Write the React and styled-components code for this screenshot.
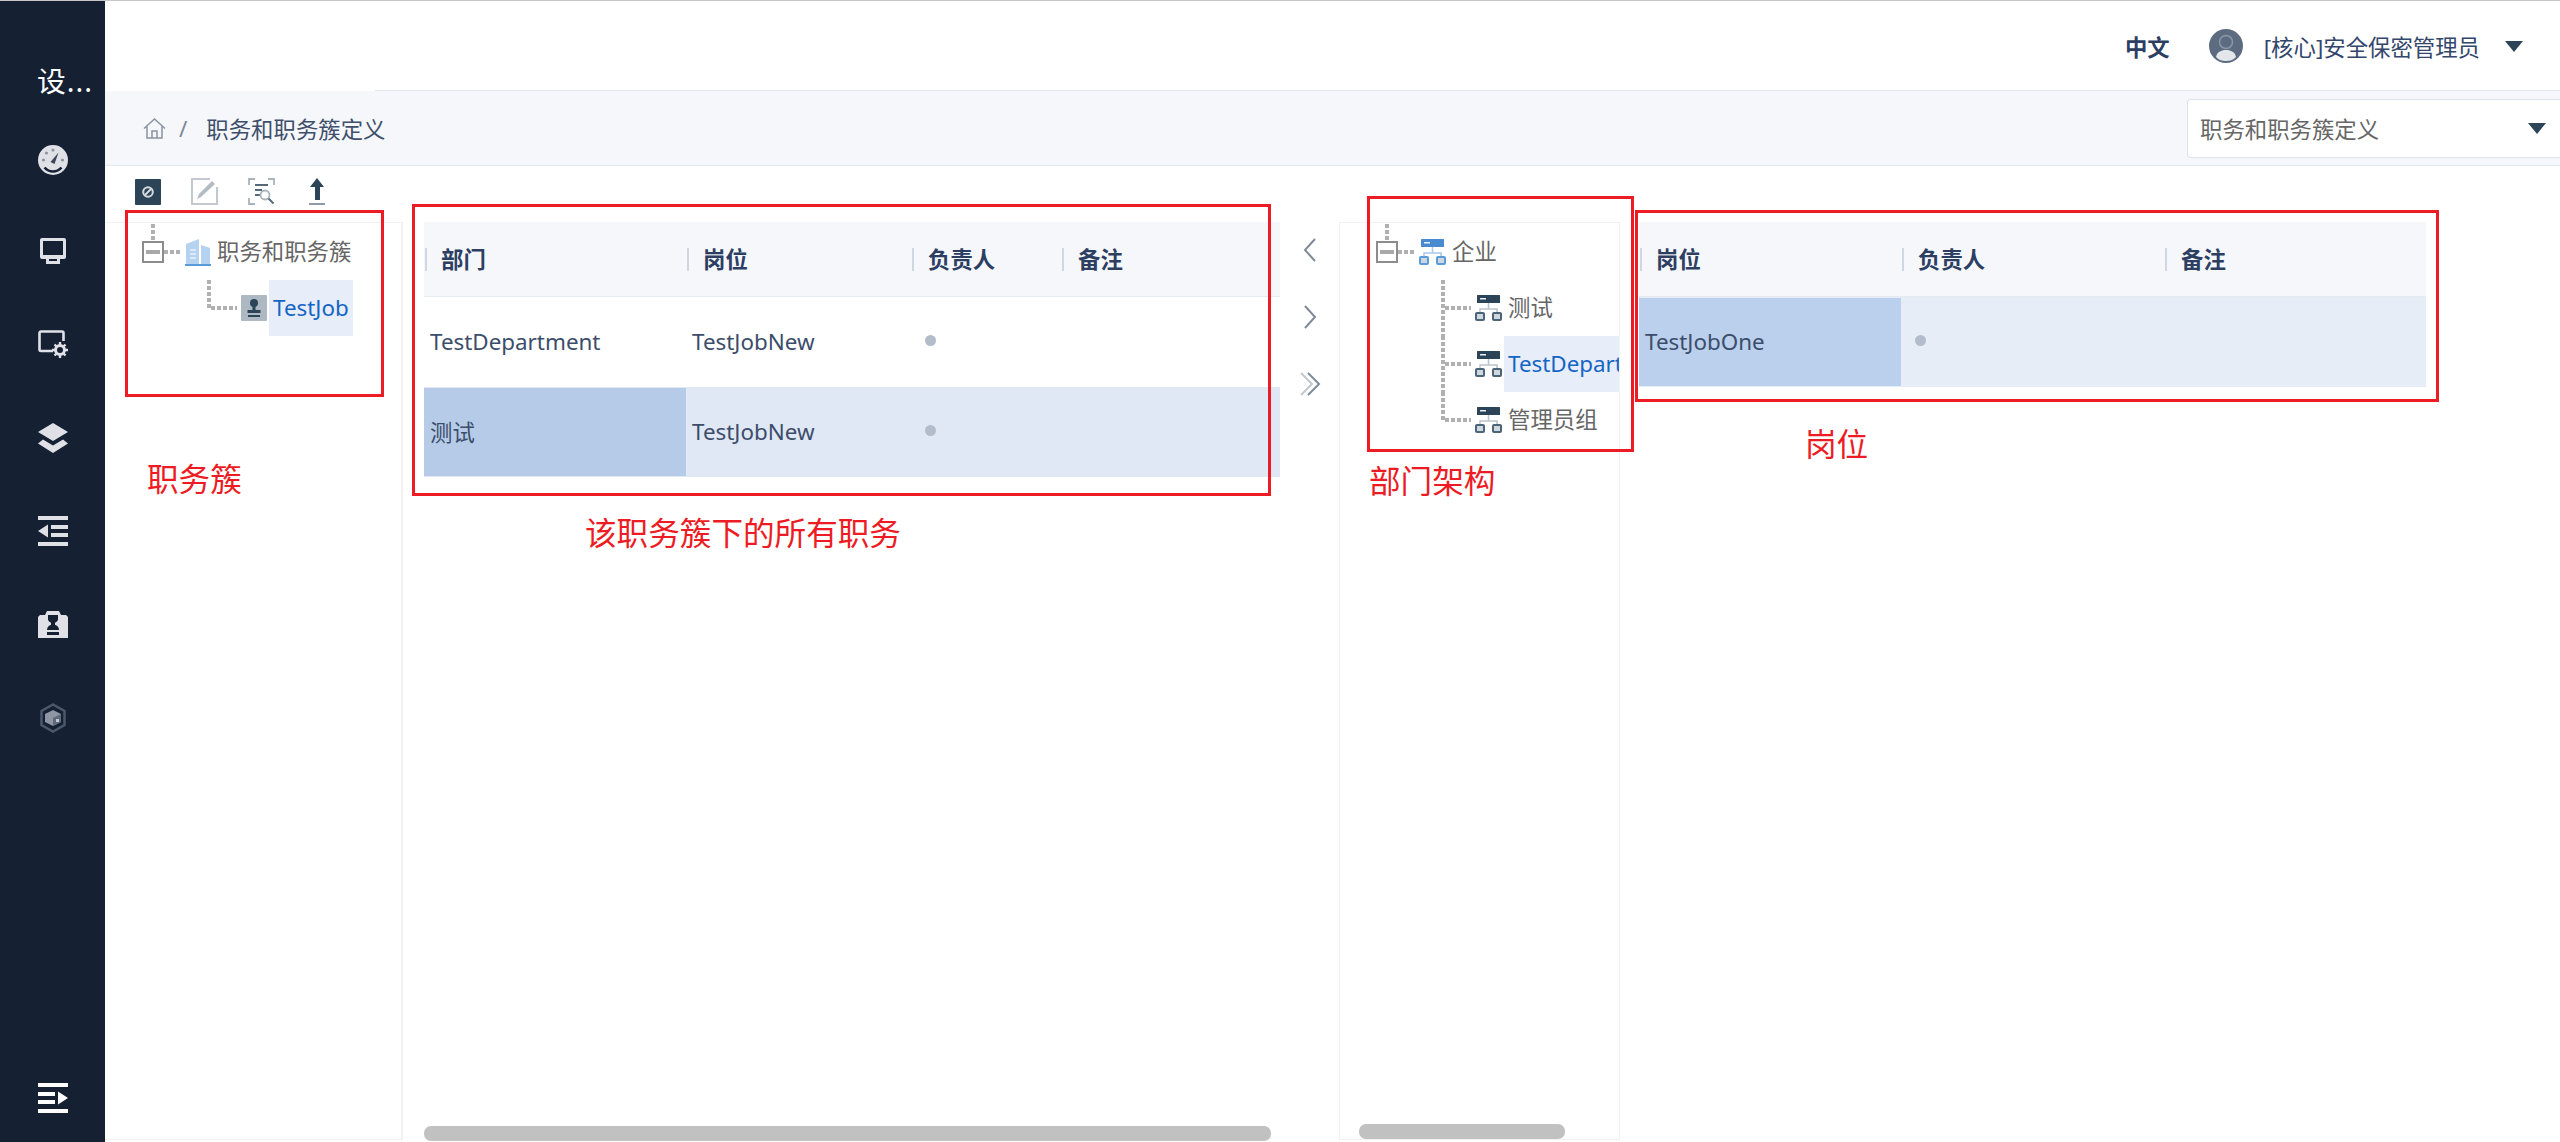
import React from 'react';
import styled, { createGlobalStyle } from 'styled-components';

const FONT = `"Noto Sans", "Noto Sans CJK SC", sans-serif`;

const Global = createGlobalStyle`
  html, body { margin: 0; padding: 0; background: #fff; }
  body { font-family: ${FONT}; font-size: 22.4px; }
  * { box-sizing: border-box; }
`;

/* Sidebar drawings */
function Gauge() {
  return (
    <svg width="30" height="30" viewBox="0 0 30 30">
      <circle cx="15" cy="15" r="15" fill="#dfe1e6" />
      <path d="M6.500 22.500c2.500 2.800 5.300 4 8.500 4s6-1.200 8.500-4" fill="none" stroke="#152033" strokeWidth="2.600" />
      <path d="M12.500 17l8-9.500-4 11.500z" fill="#3c4759" />
      <g fill="#8d94a1">
        <circle cx="5.500" cy="15" r="1.600" />
        <circle cx="8.500" cy="8" r="1.600" />
        <circle cx="15" cy="5" r="1.600" />
        <circle cx="24.500" cy="15" r="1.600" />
      </g>
    </svg>
  );
}

function Monitor() {
  return (
    <svg width="28" height="28" viewBox="0 0 28 28">
      <path d="M3 1h22a2 2 0 0 1 2 2v17a2 2 0 0 1-2 2h-4v5H7v-5H3a2 2 0 0 1-2-2V3a2 2 0 0 1 2-2z" fill="#dfe1e6" />
      <rect x="4" y="4" width="20" height="14" fill="#152033" />
      <rect x="10" y="22" width="8" height="2" fill="#152033" />
    </svg>
  );
}

function ScreenGear() {
  return (
    <svg width="30" height="28" viewBox="0 0 30 28">
      <path d="M15 21H3a1.500 1.500 0 0 1-1.500-1.500V3A1.500 1.500 0 0 1 3 1.500h21A1.500 1.500 0 0 1 25.500 3v8" fill="none" stroke="#dfe1e6" strokeWidth="2.600" />
      <circle cx="22" cy="20" r="4.500" fill="none" stroke="#dfe1e6" strokeWidth="3" />
      <path d="M22 12v3M22 25v3M14 20h3M27 20h3M16.500 14.500l2 2M25.500 23.500l2 2M16.500 25.500l2-2M25.500 16.500l2-2" stroke="#dfe1e6" strokeWidth="2.400" />
    </svg>
  );
}

function Layers() {
  return (
    <svg width="30" height="30" viewBox="0 0 30 30">
      <path d="M15 0l15 9-15 9L0 9z" fill="#dfe1e6" />
      <path d="M5 16.500l10 6 10-6 5 4-15 9.500L0 20.500z" fill="#dfe1e6" />
    </svg>
  );
}

function IndentLeft() {
  return (
    <svg width="30" height="30" viewBox="0 0 30 30">
      <g fill="#dfe1e6">
        <rect width="30" height="4" />
        <rect y="26" width="30" height="4" />
        <rect x="13" y="9" width="17" height="4" />
        <rect x="13" y="17" width="17" height="4" />
        <path d="M10 8.500v13L0 15z" />
      </g>
    </svg>
  );
}

function Case() {
  return (
    <svg width="30" height="27" viewBox="0 0 30 27">
      <path d="M0 6l2-2h5l2-4h12l2 4h5l2 2v21H0z" fill="#dfe1e6" />
      <path d="M10 4h10v4.500c0 1.500-2 2.700-3 3.300v2c2 .7 4 2.500 4 5.200H9c0-2.700 2-4.500 4-5.200v-2c-1-.6-3-1.800-3-3.300z" fill="#152033" />
      <rect x="9" y="21" width="12" height="3" fill="#152033" />
    </svg>
  );
}

function HexCube() {
  return (
    <svg width="28" height="30" viewBox="0 0 28 30">
      <path d="M14 1.500l11.500 6.500v14L14 28.500 2.500 22V8z" fill="none" stroke="#4b586c" strokeWidth="2.500" />
      <path d="M14 7l8 4v8l-8 4-8-4v-8z" fill="#8e96a3" />
      <path d="M14 15v8l8-4v-8z" fill="#5e6a7c" />
      <path d="M17 16h3v3h-3z" fill="#c3c7ce" />
    </svg>
  );
}

function IndentRight() {
  return (
    <svg width="30" height="30" viewBox="0 0 30 30">
      <g fill="#fff">
        <rect width="30" height="4" />
        <rect y="26" width="30" height="4" />
        <rect y="9" width="17" height="4" />
        <rect y="17" width="17" height="4" />
        <path d="M20 8.500v13L30 15z" />
      </g>
    </svg>
  );
}

/* Toolbar drawings */
function BanTool() {
  return (
    <svg width="26" height="26" viewBox="0 0 26 26">
      <rect width="26" height="26" rx="1" fill="#2c4457" />
      <circle cx="13" cy="13" r="4.800" fill="none" stroke="#d5dade" strokeWidth="2" />
      <path d="M9.500 16.500l7-7" stroke="#d5dade" strokeWidth="2" />
    </svg>
  );
}

function EditTool() {
  return (
    <svg width="27" height="27" viewBox="0 0 27 27" fill="none">
      <path d="M19 1H1v25h25V9" stroke="#c3c9ce" strokeWidth="2" />
      <path d="M6 21l2-5L21 3l3 3L10 19z" fill="#b4bcc3" />
    </svg>
  );
}

function ScanTool() {
  return (
    <svg width="27" height="27" viewBox="0 0 27 27" fill="none">
      <path d="M1 7V1h6M20 1h6v6M1 20v6h6" stroke="#a9b3bb" strokeWidth="1.800" />
      <path d="M7 7h13M7 12h7M7 17h5" stroke="#54697a" strokeWidth="1.800" />
      <circle cx="17" cy="17" r="4.500" stroke="#a9b3bb" strokeWidth="1.800" />
      <path d="M20.500 20.500l5 5" stroke="#54697a" strokeWidth="2" />
    </svg>
  );
}

function UploadTool() {
  return (
    <svg width="16" height="27" viewBox="0 0 16 27">
      <path d="M8 0l7 9h-4v13H6V9H1z" fill="#2c4457" />
      <rect y="25" width="16" height="2" fill="#8e9ba6" />
    </svg>
  );
}

/* Tree drawings */
function BuildingIcon() {
  return (
    <svg width="26" height="27" viewBox="0 0 26 27">
      <path d="M1 5l13-5v25H1z" fill="#b5d3f1" />
      <path d="M16 6l9 3v16h-9z" fill="#b5d3f1" />
      <path d="M5 11h6M5 15h6M5 19h6" stroke="#e8f1fb" strokeWidth="1.500" />
      <rect y="25" width="26" height="2" fill="#5b9bd9" />
    </svg>
  );
}

function StampIcon() {
  return (
    <svg width="26" height="26" viewBox="0 0 26 26">
      <rect width="26" height="26" rx="1" fill="#aeb8c3" />
      <circle cx="13" cy="8" r="4" fill="#2c4457" />
      <path d="M11.500 11h3v4h5v3h-13v-3h5z" fill="#2c4457" />
      <rect x="7" y="20" width="12" height="2" fill="#2c4457" />
    </svg>
  );
}

function OrgIcon({ main, line, small }) {
  return (
    <svg width="27" height="26" viewBox="0 0 27 26">
      <rect x="2" width="23" height="8" rx="0.500" fill={main} />
      <rect x="5" y="3" width="6" height="1.500" fill="#e6eef6" />
      <path d="M13.500 8v6M5 18v-4h17v4" fill="none" stroke={line} strokeWidth="1.500" />
      <rect x="1" y="18" width="8" height="7" rx="1" fill="#cfd8e0" stroke={small} strokeWidth="2" />
      <rect x="18" y="18" width="8" height="7" rx="1" fill="#cfd8e0" stroke={small} strokeWidth="2" />
    </svg>
  );
}

function Chevron({ d, color = '#7e8b99' }) {
  return (
    <svg width="16" height="26" viewBox="0 0 16 26">
      <path d={d} fill="none" stroke={color} strokeWidth="2" />
    </svg>
  );
}

function TreeRoot({ icon, label }) {
  return (
    <TreeRow $indent={36}>
      <Expander />
      <RootDash />
      {icon}
      <TreeLabel>{label}</TreeLabel>
    </TreeRow>
  );
}

function TreeChild({ icon, label, last, selected }) {
  return (
    <TreeRow $indent={101}>
      <Elbow $last={last} />
      {icon}
      <TreeLabel $selected={selected}>{label}</TreeLabel>
    </TreeRow>
  );
}

function DataTable({ columns, rows }) {
  return (
    <Table>
      <HeadRow $columns={columns.map(c => c.width).join(' ')}>
        {columns.map(c => (
          <HeadCell key={c.title}>
            <HeadLabel>{c.title}</HeadLabel>
          </HeadCell>
        ))}
      </HeadRow>
      {rows.map((row, i) => (
        <BodyRow key={i} $columns={columns.map(c => c.width).join(' ')} $tint={row.tint}>
          {row.cells.map((cell, j) => (
            <BodyCell key={j} $picked={row.picked === j} $pickedBg={row.pickedBg}>
              {cell === '•' ? <Dot /> : cell}
            </BodyCell>
          ))}
        </BodyRow>
      ))}
    </Table>
  );
}

export default function App() {
  const org = <OrgIcon main="#2c4457" line="#b9c4ce" small="#4c6478" />;
  return (
    <Page>
      <Global />
      <Sidebar>
        <Title>设...</Title>
        <NavItem $short><Gauge /></NavItem>
        <NavItem><Monitor /></NavItem>
        <NavItem><ScreenGear /></NavItem>
        <NavItem><Layers /></NavItem>
        <NavItem><IndentLeft /></NavItem>
        <NavItem><Case /></NavItem>
        <NavItem><HexCube /></NavItem>
        <SideFoot><IndentRight /></SideFoot>
      </Sidebar>

      <Main>
        <Header>
          <Lang>中文</Lang>
          <Avatar>
            <svg width="34" height="34" viewBox="0 0 34 34">
              <circle cx="17" cy="17" r="17" fill="#5c6b80" />
              <circle cx="17" cy="13" r="6.500" fill="#5c6b80" stroke="#8a96a6" strokeWidth="1.500" />
              <path d="M7 28c1-5 5-7 10-7s9 2 10 7c-3 3-6 4-10 4s-7-1-10-4z" fill="#e3e6ea" />
            </svg>
          </Avatar>
          <UserName>[核心]安全保密管理员</UserName>
          <Caret $ml={25} />
        </Header>

        <Crumbs>
          <CrumbTrail>
            <svg width="23" height="21" viewBox="0 0 23 21" fill="none" stroke="#8a94a3" strokeWidth="1.500">
              <path d="M1 10.500L11.500 1 22 10.500M4 8.500V20h15V8.500M9 20v-7h5v7" />
            </svg>
            <Slash>/</Slash>
            <CrumbText>职务和职务簇定义</CrumbText>
          </CrumbTrail>
          <PageSelect>
            职务和职务簇定义
            <Caret $ml={0} />
          </PageSelect>
        </Crumbs>

        <Toolbar>
          <BanTool />
          <EditTool />
          <ScanTool />
          <UploadTool />
        </Toolbar>

        <Panels>
          <TreePanel $width={297} $noLeft>
            <TreeRoot icon={<BuildingIcon />} label="职务和职务簇" />
            <TreeChild icon={<StampIcon />} label="TestJob" last selected />
          </TreePanel>

          <TablePanel $width={878} $pad={21} $left>
            <DataTable
              columns={[
                { title: '部门', width: '262px' },
                { title: '岗位', width: '225px' },
                { title: '负责人', width: '150px' },
                { title: '备注', width: '1fr' },
              ]}
              rows={[
                { cells: ['TestDepartment', 'TestJobNew', '•', ''] },
                { cells: ['测试', 'TestJobNew', '•', ''], tint: '#e1e8f5', picked: 0, pickedBg: '#b5cbe8' },
              ]}
            />
            <ScrollThumb $ml={0} $width={847} />
          </TablePanel>

          <Arrows>
            <Chevron d="M13 2L3 13l10 11" />
            <Chevron d="M3 2l10 11L3 24" />
            <svg width="22" height="26" viewBox="0 0 22 26" fill="none" strokeWidth="2">
              <path d="M2 2l11 11L2 24" stroke="#c0c8d0" />
              <path d="M9 2l11 11L9 24" stroke="#7e8b99" />
            </svg>
          </Arrows>

          <TreePanel $width={281}>
            <TreeRoot icon={<OrgIcon main="#4a8ad0" line="#a9c8ea" small="#5b9bd9" />} label="企业" />
            <TreeChild icon={org} label="测试" />
            <TreeChild icon={org} label="TestDepartment" selected />
            <TreeChild icon={org} label="管理员组" last />
            <ScrollThumb $ml={19} $width={206} $raised />
          </TreePanel>

          <TablePanel $width={806} $pad={19}>
            <DataTable
              columns={[
                { title: '岗位', width: '262px' },
                { title: '负责人', width: '263px' },
                { title: '备注', width: '1fr' },
              ]}
              rows={[
                { cells: ['TestJobOne', '•', ''], tint: '#e7edf7', picked: 0, pickedBg: '#bad0ec' },
              ]}
            />
          </TablePanel>
        </Panels>
      </Main>

      <RedBox $x={125} $y={210} $w={259} $h={187} />
      <RedBox $x={412} $y={204} $w={859} $h={292} />
      <RedBox $x={1367} $y={196} $w={267} $h={256} />
      <RedBox $x={1635} $y={210} $w={804} $h={192} />
      <RedNote $x={147} $y={460}>职务簇</RedNote>
      <RedNote $x={585} $y={514}>该职务簇下的所有职务</RedNote>
      <RedNote $x={1369} $y={462}>部门架构</RedNote>
      <RedNote $x={1805} $y={425}>岗位</RedNote>
    </Page>
  );
}

const Page = styled.div`
  position: relative;
  display: flex;
  width: 2560px;
  height: 1142px;
  overflow: hidden;
  border-top: 1px solid #c6c6c6;
  font-family: ${FONT};
`;

const Sidebar = styled.aside`
  display: flex;
  flex-direction: column;
  flex: 0 0 105px;
  padding-top: 57px;
  background: #152033;
`;

const Title = styled.div`
  height: 46px;
  padding-left: 37px;
  margin-bottom: 11px;
  font-size: 28.8px;
  line-height: 46px;
  letter-spacing: 1px;
  color: #fff;
  white-space: nowrap;
`;

const NavItem = styled.div`
  display: flex;
  align-items: center;
  justify-content: center;
  height: ${props => (props.$short ? '89px' : '93.5px')};
`;

const SideFoot = styled.div`
  display: flex;
  justify-content: center;
  margin-top: auto;
  padding-bottom: 29px;
`;

const Main = styled.main`
  display: flex;
  flex-direction: column;
  flex: 1;
  min-width: 0;
`;

const Header = styled.header`
  position: relative;
  display: flex;
  align-items: center;
  justify-content: flex-end;
  flex: 0 0 90px;
  padding-right: 37px;
  background: #fff;

  &::after {
    content: '';
    position: absolute;
    left: 270px;
    right: 0;
    bottom: 0;
    height: 1px;
    background: #e4e9f0;
  }
`;

const Lang = styled.span`
  margin-right: 39px;
  font-weight: 700;
  color: #2d3e63;
`;

const Avatar = styled.span`
  display: flex;
  margin-right: 21px;
`;

const UserName = styled.span`
  color: #33466b;
`;

const Caret = styled.i`
  display: block;
  margin-left: ${props => props.$ml}px;
  border-top: 11px solid #2c4457;
  border-left: 9.5px solid transparent;
  border-right: 9.5px solid transparent;
`;

const Crumbs = styled.div`
  display: flex;
  align-items: center;
  justify-content: space-between;
  flex: 0 0 75px;
  padding-left: 38px;
  background: #f5f7fb;
  border-bottom: 1px solid #e4eaf2;
`;

const CrumbTrail = styled.div`
  display: flex;
  align-items: center;
`;

const Slash = styled.span`
  margin: 0 19px 0 13px;
  color: #7d8797;
`;

const CrumbText = styled.span`
  color: #3f4f6b;
`;

const PageSelect = styled.div`
  display: flex;
  align-items: center;
  justify-content: space-between;
  width: 373px;
  height: 59px;
  padding: 0 14px 0 12px;
  background: #fff;
  border: 1px solid #dde3ec;
  border-right: 0;
  border-radius: 4px 0 0 4px;
  color: #666;
`;

const Toolbar = styled.div`
  display: flex;
  align-items: center;
  gap: 30px;
  flex: 0 0 56px;
  padding: 0 0 5px 30px;

  svg:last-child { margin-left: 4px; }
`;

const Panels = styled.div`
  display: flex;
  flex: 0 0 918px;
`;

const TreePanel = styled.section`
  position: relative;
  display: flex;
  flex-direction: column;
  flex: 0 0 ${props => props.$width}px;
  overflow: hidden;
  padding-left: ${props => (props.$noLeft ? '1px' : '0')};
  border-top: 1px solid #f0f1f3;
  border-right: 1px solid #f0f1f3;
  border-bottom: 1px solid #f0f1f3;
  border-left: ${props => (props.$noLeft ? '0' : '1px solid #f0f1f3')};
`;

const TreeRow = styled.div`
  display: flex;
  align-items: center;
  flex: 0 0 56px;
  padding-left: ${props => props.$indent}px;
  white-space: nowrap;
  &:first-child { margin-top: 1px; }

  svg { flex-shrink: 0; }
`;

const Expander = styled.span`
  position: relative;
  flex: 0 0 22px;
  height: 22px;
  border: 2px solid #8c8c8c;

  &::before {
    content: '';
    position: absolute;
    top: 7px;
    left: 2px;
    width: 14px;
    height: 4px;
    background: #a8a8a8;
  }

  &::after {
    content: '';
    position: absolute;
    top: -19px;
    left: 7px;
    width: 4px;
    height: 17px;
    background: repeating-linear-gradient(to bottom, #b0b0b0 0 4px, transparent 4px 6px);
  }
`;

const RootDash = styled.span`
  flex: 0 0 17px;
  height: 4px;
  margin-right: 4px;
  background: repeating-linear-gradient(to right, #b0b0b0 0 4px, transparent 4px 6px);
`;

const Elbow = styled.span`
  position: relative;
  flex: 0 0 30px;
  height: 56px;
  margin-right: 4px;

  &::before {
    content: '';
    position: absolute;
    top: 0;
    left: 0;
    width: 4px;
    height: ${props => (props.$last ? '30px' : '56px')};
    background: repeating-linear-gradient(to bottom, #b0b0b0 0 4px, transparent 4px 6px);
  }

  &::after {
    content: '';
    position: absolute;
    top: 26px;
    left: 4px;
    right: 0;
    height: 4px;
    background: repeating-linear-gradient(to right, #b0b0b0 0 4px, transparent 4px 6px);
  }
`;

const TreeLabel = styled.span`
  flex-shrink: 0;
  height: 56px;
  margin-left: 2px;
  padding: 0 4px;
  line-height: 56px;
  color: ${props => (props.$selected ? '#1565c4' : '#666')};
  background: ${props => (props.$selected ? '#e7eef9' : 'transparent')};
`;

const TablePanel = styled.section`
  display: flex;
  flex-direction: column;
  flex: 0 0 ${props => props.$width}px;
  padding-left: ${props => props.$pad}px;
  border-left: ${props => (props.$left ? '1px solid #f0f1f3' : '0')};
`;

const Table = styled.div`
  display: flex;
  flex-direction: column;
`;

const HeadRow = styled.div`
  display: grid;
  grid-template-columns: ${props => props.$columns};
  height: 75px;
  background: #f5f7fb;
  border-bottom: 1px solid #e6ebf2;
`;

const HeadCell = styled.div`
  display: flex;
  align-items: center;
`;

const HeadLabel = styled.span`
  margin-left: 1px;
  padding-left: 14px;
  border-left: 2px solid #ced7e2;
  height: 23px;
  line-height: 23px;
  font-weight: 700;
  color: #2d3e63;
`;

const BodyRow = styled.div`
  display: grid;
  grid-template-columns: ${props => props.$columns};
  height: 90px;
  background: ${props => props.$tint || '#fff'};
`;

const BodyCell = styled.div`
  display: flex;
  align-items: center;
  padding: 0 0 2px 6px;
  margin: 1px 0;
  color: #3c4d6b;
  background: ${props => (props.$picked ? props.$pickedBg : 'transparent')};
`;

const Dot = styled.i`
  display: block;
  width: 11px;
  height: 11px;
  margin: -1px 0 0 8px;
  border-radius: 50%;
  background: #b3bccb;
`;

const ScrollThumb = styled.div`
  flex: 0 0 15px;
  width: ${props => props.$width}px;
  margin: auto 0 ${props => (props.$raised ? '0' : '-1px')} ${props => props.$ml}px;
  border-radius: 7px;
  background: #c1c1c1;
`;

const Arrows = styled.div`
  display: flex;
  flex-direction: column;
  align-items: center;
  gap: 41px;
  flex: 0 0 59px;
  padding-top: 15px;
`;

const RedBox = styled.div`
  position: absolute;
  left: ${props => props.$x}px;
  top: ${props => props.$y - 1}px;
  width: ${props => props.$w}px;
  height: ${props => props.$h}px;
  border: 3px solid #ed1c24;
  pointer-events: none;
`;

const RedNote = styled.div`
  position: absolute;
  left: ${props => props.$x}px;
  top: ${props => props.$y}px;
  font-size: 31.6px;
  line-height: 36px;
  color: #ed1c24;
  white-space: nowrap;
`;
